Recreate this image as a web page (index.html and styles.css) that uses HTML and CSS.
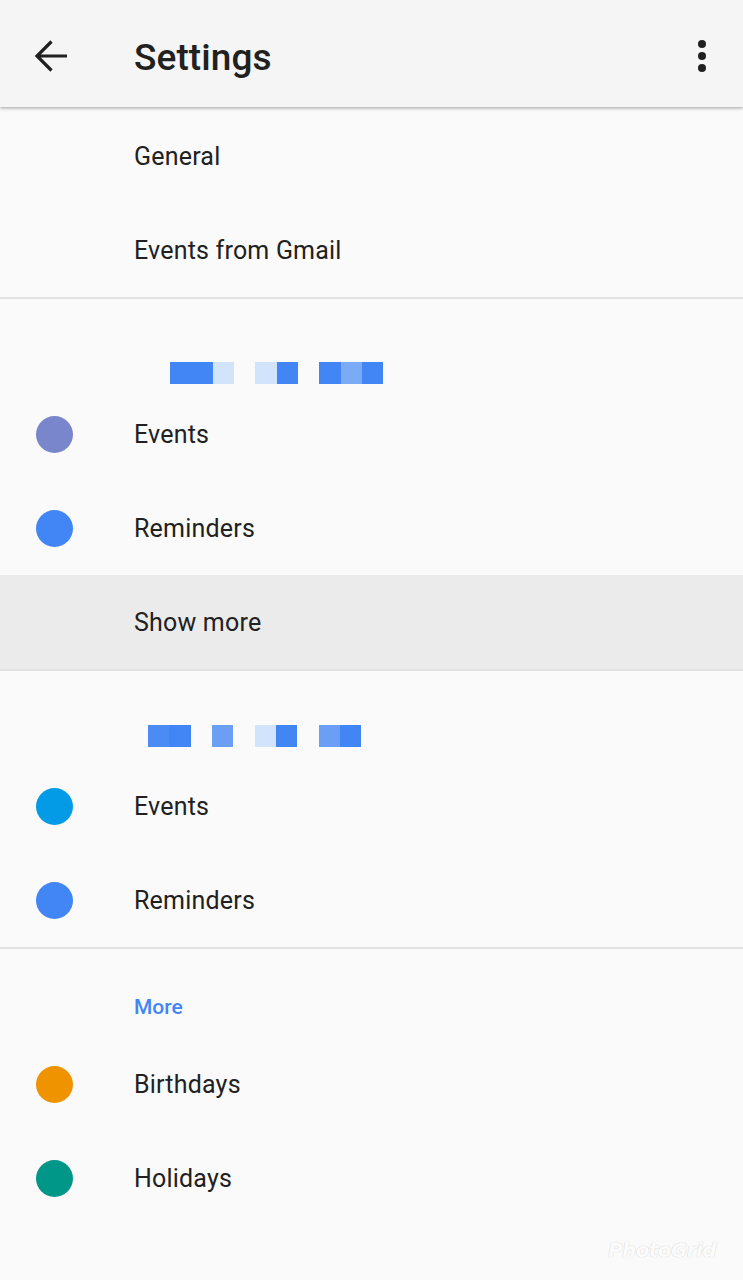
FILE: index.html
```html
<!DOCTYPE html>
<html>
<head>
<meta charset="utf-8">
<link rel="stylesheet" href="styles.css">
</head>
<body>
<header class="appbar">
  <svg class="back" width="40" height="40" viewBox="0 0 40 40">
    <path d="M35 20H5M19.5 5.5L5 20l14.5 14.5" fill="none" stroke="#212121" stroke-width="3.2" stroke-linecap="butt"/>
  </svg>
  <h1 class="title">Settings</h1>
  <svg class="kebab" width="12" height="36" viewBox="0 0 12 36">
    <circle cx="6" cy="6" r="4" fill="#212121"/>
    <circle cx="6" cy="18" r="4" fill="#212121"/>
    <circle cx="6" cy="30" r="4" fill="#212121"/>
  </svg>
</header>

<main>
  <section class="section first">
    <div class="row"><span class="label">General</span></div>
    <div class="row"><span class="label">Events from Gmail</span></div>
  </section>

  <section class="section">
    <div class="acct acct1">
      <div class="px d"></div><div class="px d"></div><div class="px l"></div>
      <div class="gap"></div>
      <div class="px l"></div><div class="px d"></div>
      <div class="gap"></div>
      <div class="px d"></div><div class="px m"></div><div class="px d"></div>
    </div>
    <div class="row"><span class="dot" style="background:#7986cb"></span><span class="label">Events</span></div>
    <div class="row"><span class="dot" style="background:#4285f4"></span><span class="label">Reminders</span></div>
    <div class="row shaded"><span class="label">Show more</span></div>
  </section>

  <section class="section">
    <div class="acct acct2">
      <div class="px d2"></div><div class="px d"></div>
      <div class="gap"></div>
      <div class="px m2"></div>
      <div class="gap"></div>
      <div class="px l"></div><div class="px d"></div>
      <div class="gap"></div>
      <div class="px m2"></div><div class="px d"></div>
    </div>
    <div class="row"><span class="dot" style="background:#039be5"></span><span class="label">Events</span></div>
    <div class="row"><span class="dot" style="background:#4285f4"></span><span class="label">Reminders</span></div>
  </section>

  <section class="section last">
    <div class="subhead">More</div>
    <div class="row"><span class="dot" style="background:#f09300"></span><span class="label">Birthdays</span></div>
    <div class="row"><span class="dot" style="background:#009688"></span><span class="label">Holidays</span></div>
  </section>
</main>

<div class="watermark">PhotoGrid</div>
</body>
</html>
```

FILE: styles.css
```css
html, body {
  margin: 0;
  padding: 0;
  background: #fafafa;
  font-family: Roboto, "Liberation Sans", sans-serif;
  color: #212121;
  width: 743px;
  height: 1280px;
  overflow: hidden;
}

.appbar {
  height: 107px;
  box-sizing: border-box;
  padding-top: 4px;
  background: #f5f5f5;
  display: flex;
  align-items: center;
  box-shadow: 0 1px 3px rgba(0,0,0,0.28), 0 2px 4px rgba(0,0,0,0.08);
  position: relative;
  z-index: 2;
}

.back {
  margin-left: 32px;
  flex: none;
}

.title {
  margin: 4px 0 0 62px;
  font-size: 37px;
  font-weight: 500;
  color: #212121;
  flex: 1;
  letter-spacing: 0.1px;
}

.kebab {
  margin-right: 35px;
  flex: none;
}

main {
  padding-top: 2px;
}

.section {
  border-bottom: 2px solid #e2e2e2;
}

.section.last {
  border-bottom: none;
}

.row {
  height: 94px;
  display: flex;
  align-items: center;
  position: relative;
}

.row.shaded {
  background: #ebebeb;
}

.label {
  position: absolute;
  left: 134px;
  top: 34px;
  font-size: 25px;
  line-height: 28px;
  letter-spacing: 0.2px;
  color: #212121;
}

.dot {
  width: 37px;
  height: 37px;
  border-radius: 50%;
  margin-left: 36px;
  flex: none;
}

.acct {
  display: flex;
  height: 22px;
  box-sizing: content-box;
}

.acct1 {
  padding: 63px 0 3px 170px;
}

.acct2 {
  padding: 54px 0 12px 148px;
}

.px {
  width: 21.33px;
  height: 22px;
  flex: none;
}

.acct1 .px:first-child {
  width: 21.5px;
}

.gap {
  width: 21.33px;
  flex: none;
}

.px.d { background: #4285f4; }
.px.d2 { background: #4a8bf4; }
.px.l { background: #d2e3fc; }
.px.m { background: #7baaf7; }
.px.m2 { background: #6a9ff5; }

.subhead {
  padding: 46px 0 18px 134px;
  font-size: 21px;
  line-height: 24px;
  font-weight: 500;
  color: #4285f4;
}

.watermark {
  position: absolute;
  left: 608px;
  top: 1238px;
  font-family: "DejaVu Sans", sans-serif;
  font-style: italic;
  font-weight: bold;
  font-size: 20px;
  color: #fbfbfb;
  letter-spacing: -0.6px;
  text-shadow: 0 0 1px #d8d8d8, 0 0 1px #d8d8d8;
}
```
